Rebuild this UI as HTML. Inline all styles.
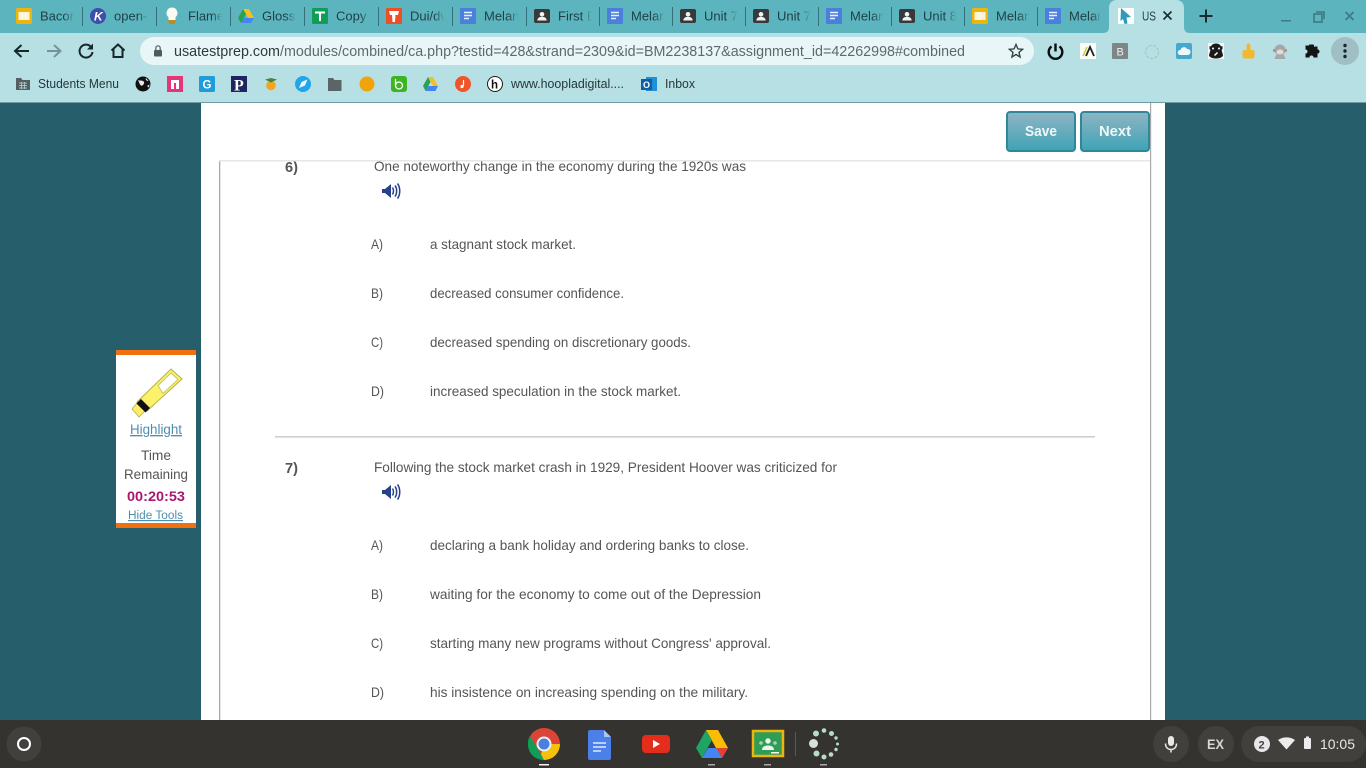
<!DOCTYPE html>
<html><head><meta charset="utf-8"><title>USATestprep</title>
<style>
html,body{margin:0;padding:0;width:1366px;height:768px;overflow:hidden;background:#265f6b}
svg{display:block;position:absolute;left:0;top:0}
text{font-family:"Liberation Sans",sans-serif}
.t{font-size:13px;fill:#1f3f45}
.q{font-size:14px;fill:#555}
.b{font-size:12.500px;fill:#26373a}
</style></head><body>
<svg width="1366" height="768" viewBox="0 0 1366 768" xmlns="http://www.w3.org/2000/svg">
<defs>
<linearGradient id="fade"><stop offset="0" stop-color="#5cb5be" stop-opacity="0"/><stop offset=".6" stop-color="#5cb5be"/><stop offset="1" stop-color="#5cb5be"/></linearGradient>
<linearGradient id="btn" x1="0" y1="0" x2="0" y2="1"><stop offset="0" stop-color="#8fb5c4"/><stop offset="1" stop-color="#3ea3b6"/></linearGradient>
<g id="doc"><rect width="16" height="16" rx="1" fill="#4a80dc"/><path d="M4 4.500h8M4 7.500h8M4 10.500h5" stroke="#e8f0fc" stroke-width="1.600"/></g>
<g id="cls"><rect width="16" height="14" y="1" rx="2" fill="#37393b"/><circle cx="8" cy="6.300" r="2.300" fill="#f2f2f2"/><path d="M3.300 12.500c.3-2.800 2.200-3.600 4.700-3.600s4.400.8 4.700 3.600z" fill="#f2f2f2"/></g>
<g id="sl"><rect width="16" height="16" rx="2" fill="#efb50f"/><rect x="2.500" y="4" width="11" height="8" fill="#fdf6dc"/></g>
<g id="spk"><path d="M1 7h3l6-5v14l-6-5H1z" fill="#27418a"/><path d="M11.500 5.500c1.300 2 1.300 5 0 7M14 3.500c2.200 3 2.200 8 0 11M16.500 1.500c3 4 3 11 0 15" fill="none" stroke="#27418a" stroke-width="1.500"/></g>
</defs>

<!-- page -->
<rect width="1366" height="768" fill="#265f6b"/>
<rect x="201" y="103" width="964" height="617" fill="#fff"/>
<rect x="219" y="161" width="1.300" height="559" fill="#a9a9a9"/>
<rect x="1150" y="103" width="1.200" height="617" fill="#a9a9a9"/>
<rect x="275" y="436" width="820" height="1.600" fill="#cfcfcf"/>

<!-- question 6 -->
<text x="285" y="172" font-size="14.500" font-weight="bold" fill="#555" textLength="13" lengthAdjust="spacingAndGlyphs">6)</text>
<text class="q" x="374" y="171" textLength="372" lengthAdjust="spacingAndGlyphs">One noteworthy change in the economy during the 1920s was</text>
<use href="#spk" x="381" y="182"/>
<text class="q" x="371" y="249" textLength="12" lengthAdjust="spacingAndGlyphs">A)</text>
<text class="q" x="430" y="249" textLength="146" lengthAdjust="spacingAndGlyphs">a stagnant stock market.</text>
<text class="q" x="371" y="298" textLength="12" lengthAdjust="spacingAndGlyphs">B)</text>
<text class="q" x="430" y="298" textLength="194" lengthAdjust="spacingAndGlyphs">decreased consumer confidence.</text>
<text class="q" x="371" y="347" textLength="12" lengthAdjust="spacingAndGlyphs">C)</text>
<text class="q" x="430" y="347" textLength="261" lengthAdjust="spacingAndGlyphs">decreased spending on discretionary goods.</text>
<text class="q" x="371" y="396" textLength="13" lengthAdjust="spacingAndGlyphs">D)</text>
<text class="q" x="430" y="396" textLength="251" lengthAdjust="spacingAndGlyphs">increased speculation in the stock market.</text>

<!-- header band over the scrolled content -->
<rect x="201" y="103" width="949" height="57" fill="#fff"/>
<rect x="219" y="160" width="931" height="1.500" fill="#e6e6e6"/>

<!-- buttons -->
<rect x="1007" y="112" width="68" height="39" rx="3" fill="url(#btn)" stroke="#2f8799" stroke-width="2"/>
<rect x="1081" y="112" width="68" height="39" rx="3" fill="url(#btn)" stroke="#2f8799" stroke-width="2"/>
<text x="1025" y="136" font-size="15" font-weight="bold" fill="#eef6f8" textLength="32" lengthAdjust="spacingAndGlyphs">Save</text>
<text x="1099" y="136" font-size="15" font-weight="bold" fill="#eef6f8" textLength="32" lengthAdjust="spacingAndGlyphs">Next</text>

<!-- question 7 -->
<text x="285" y="473" font-size="14.500" font-weight="bold" fill="#555" textLength="13" lengthAdjust="spacingAndGlyphs">7)</text>
<text class="q" x="374" y="472" textLength="463" lengthAdjust="spacingAndGlyphs">Following the stock market crash in 1929, President Hoover was criticized for</text>
<use href="#spk" x="381" y="483"/>
<text class="q" x="371" y="550" textLength="12" lengthAdjust="spacingAndGlyphs">A)</text>
<text class="q" x="430" y="550" textLength="319" lengthAdjust="spacingAndGlyphs">declaring a bank holiday and ordering banks to close.</text>
<text class="q" x="371" y="599" textLength="12" lengthAdjust="spacingAndGlyphs">B)</text>
<text class="q" x="430" y="599" textLength="331" lengthAdjust="spacingAndGlyphs">waiting for the economy to come out of the Depression</text>
<text class="q" x="371" y="648" textLength="12" lengthAdjust="spacingAndGlyphs">C)</text>
<text class="q" x="430" y="648" textLength="341" lengthAdjust="spacingAndGlyphs">starting many new programs without Congress' approval.</text>
<text class="q" x="371" y="697" textLength="13" lengthAdjust="spacingAndGlyphs">D)</text>
<text class="q" x="430" y="697" textLength="318" lengthAdjust="spacingAndGlyphs">his insistence on increasing spending on the military.</text>

<!-- sidebar -->
<rect x="116" y="350" width="80" height="178" fill="#fff"/>
<rect x="116" y="350" width="80" height="5" fill="#f0700f"/>
<rect x="116" y="523" width="80" height="5" fill="#f0700f"/>
<path d="M171 369l11 10-35 32-10-9z" fill="#fbf26a" stroke="#b5b04a" stroke-width="1"/>
<path d="M171 373l7 6.500-15 14-5-8z" fill="#fff" stroke="#c9c46a" stroke-width="1"/>
<path d="M137 403l8 8-6 6-7-8z" fill="#fbee6a" stroke="#b5b04a" stroke-width=".8"/>
<path d="M141 399l9 9-4.500 4.500-9-9z" fill="#111"/>
<text x="130" y="434" font-size="13.500" fill="#4e8db0" textLength="52" lengthAdjust="spacingAndGlyphs" text-decoration="underline">Highlight</text>
<text x="141" y="460" font-size="13.500" fill="#555" textLength="30" lengthAdjust="spacingAndGlyphs">Time</text>
<text x="124" y="479" font-size="13.500" fill="#555" textLength="64" lengthAdjust="spacingAndGlyphs">Remaining</text>
<text x="127" y="501" font-size="14" font-weight="bold" fill="#a8166f" textLength="58" lengthAdjust="spacingAndGlyphs">00:20:53</text>
<text x="128" y="519" font-size="11.500" fill="#4e8db0" textLength="55" lengthAdjust="spacingAndGlyphs" text-decoration="underline">Hide Tools</text>

<!-- browser chrome -->
<rect width="1366" height="33" fill="#5cb5be"/>
<rect y="33" width="1366" height="69" fill="#b7e0e5"/>
<rect y="102" width="1366" height="1" fill="#6f9ba3"/>
<path d="M1103 33c4 0 6-2 6-6V8c0-5 3-8 8-8h59c5 0 8 3 8 8v19c0 4 2 6 6 6z" fill="#b7e0e5"/>

<!-- tab labels -->
<text class="t" x="40" y="20.500">Bacon</text><rect x="64" y="6" width="18" height="20" fill="url(#fade)"/>
<text class="t" x="114" y="20.500">open-u</text><rect x="138" y="6" width="18" height="20" fill="url(#fade)"/>
<text class="t" x="188" y="20.500">Flame</text><rect x="212" y="6" width="18" height="20" fill="url(#fade)"/>
<text class="t" x="262" y="20.500">Glossa</text><rect x="286" y="6" width="18" height="20" fill="url(#fade)"/>
<text class="t" x="336" y="20.500">Copy o</text><rect x="360" y="6" width="18" height="20" fill="url(#fade)"/>
<text class="t" x="410" y="20.500">Dui/dv</text><rect x="434" y="6" width="18" height="20" fill="url(#fade)"/>
<text class="t" x="484" y="20.500">Melan</text><rect x="508" y="6" width="18" height="20" fill="url(#fade)"/>
<text class="t" x="558" y="20.500">First B</text><rect x="581" y="6" width="18" height="20" fill="url(#fade)"/>
<text class="t" x="631" y="20.500">Melan</text><rect x="654" y="6" width="18" height="20" fill="url(#fade)"/>
<text class="t" x="704" y="20.500">Unit 7</text><rect x="727" y="6" width="18" height="20" fill="url(#fade)"/>
<text class="t" x="777" y="20.500">Unit 7</text><rect x="800" y="6" width="18" height="20" fill="url(#fade)"/>
<text class="t" x="850" y="20.500">Melan</text><rect x="873" y="6" width="18" height="20" fill="url(#fade)"/>
<text class="t" x="923" y="20.500">Unit 8</text><rect x="946" y="6" width="18" height="20" fill="url(#fade)"/>
<text class="t" x="996" y="20.500">Melan</text><rect x="1019" y="6" width="18" height="20" fill="url(#fade)"/>
<text class="t" x="1069" y="20.500">Melan</text><rect x="1092" y="6" width="15" height="20" fill="url(#fade)"/>
<text class="t" x="1142" y="20.500" textLength="14" lengthAdjust="spacingAndGlyphs">US</text>

<!-- separators -->
<path d="M82.500 7v19M156.500 7v19M230.500 7v19M304.500 7v19M378.500 7v19M452.500 7v19M526.500 7v19M599.500 7v19M672.500 7v19M745.500 7v19M818.500 7v19M891.500 7v19M964.500 7v19M1037.500 7v19" stroke="#356f78" stroke-width="1"/>

<!-- tab icons -->
<use href="#sl" x="16" y="8"/>
<circle cx="98" cy="16" r="8" fill="#3f4fa8"/><text x="94" y="20.500" font-size="12" font-weight="bold" font-style="italic" fill="#fff">K</text>
<path d="M172 7.500a5.500 5.500 0 0 1 3.500 9.700V20h-7v-2.800a5.500 5.500 0 0 1 3.500-9.700z" fill="#fbfbf2"/><path d="M168.500 20h7v2.500a2 2 0 0 1-2 1.500h-3a2 2 0 0 1-2-1.500z" fill="#c08a22"/>
<path d="M243 9h6l5 9h-6z" fill="#f4c020"/><path d="M243 9l-5 9 3 5 5-9z" fill="#2ba24c"/><path d="M241 23h10l3-5h-10z" fill="#4285f4"/>
<rect x="312" y="8" width="16" height="16" rx="1" fill="#0f9d58"/><path d="M315 12.500h10M320 12.500V21" stroke="#fff" stroke-width="2"/>
<rect x="386" y="8" width="16" height="16" rx="1" fill="#ee4e26"/><path d="M389 11h10l-1 4h-2.500l-.5 7h-2.500l-.5-7h-2z" fill="#fff"/>
<use href="#doc" x="460" y="8"/><use href="#cls" x="534" y="8"/><use href="#doc" x="607" y="8"/><use href="#cls" x="680" y="8"/><use href="#cls" x="753" y="8"/><use href="#doc" x="826" y="8"/><use href="#cls" x="899" y="8"/><use href="#sl" x="972" y="8"/><use href="#doc" x="1045" y="8"/>
<rect x="1118" y="8" width="16" height="16" fill="#fbfdfd"/><path d="M1121 8l10 9-4.500.5 1 6-3 .500-1.500-5-2.500 2z" fill="#2f9bb8"/>
<path d="M1163.500 11.500l8 8M1171.500 11.500l-8 8" stroke="#1d2f33" stroke-width="1.700"/>
<path d="M1206 9.500v13M1199.500 16h13" stroke="#17292c" stroke-width="2"/>
<rect x="1281" y="20" width="10" height="1.500" fill="#3f7b85"/>
<rect x="1314" y="14" width="8" height="8" fill="none" stroke="#3f7b85" stroke-width="1.600"/><path d="M1316 12h8v7" fill="none" stroke="#3f7b85" stroke-width="1.600"/>
<path d="M1345.500 12l8 8M1353.500 12l-8 8" stroke="#3f7b85" stroke-width="1.800"/>

<!-- toolbar -->
<path d="M29 51H15.500M21.500 45l-6.500 6 6.500 6" fill="none" stroke="#17282b" stroke-width="2"/>
<path d="M47 51h13.500M54 45l6.500 6-6.500 6" fill="none" stroke="#74949a" stroke-width="2"/>
<path d="M91.500 47.500A6.500 6.500 0 1 0 92.500 52" fill="none" stroke="#17282b" stroke-width="2"/><path d="M93 43.500v6h-6z" fill="#17282b"/>
<path d="M111.500 50.500l6.500-6 6.500 6M113.500 49v8h9v-8" fill="none" stroke="#17282b" stroke-width="2"/>
<rect x="140" y="37" width="894" height="28" rx="14" fill="#e9f6f7"/>
<rect x="154" y="50" width="8" height="6.500" rx="1" fill="#4d5c60"/><path d="M155.800 50v-2a2.200 2.200 0 0 1 4.400 0v2" fill="none" stroke="#4d5c60" stroke-width="1.200"/>
<text x="174" y="56" font-size="14.500" fill="#2c3b3f" textLength="106" lengthAdjust="spacingAndGlyphs">usatestprep.com</text>
<text x="280" y="56" font-size="14.500" fill="#5d6a6d" textLength="685" lengthAdjust="spacingAndGlyphs">/modules/combined/ca.php?testid=428&amp;strand=2309&amp;id=BM2238137&amp;assignment_id=42262998#combined</text>
<path d="M1016 44.500l1.900 4.400 4.700.4-3.600 3.100 1.100 4.600-4.100-2.500-4.100 2.500 1.100-4.600-3.600-3.100 4.700-.4z" fill="none" stroke="#33464a" stroke-width="1.400"/>
<path d="M1051.500 46.500a6.800 6.800 0 1 0 8 0" fill="none" stroke="#0c0c0c" stroke-width="2.400"/><path d="M1055.500 43.500v8" stroke="#0c0c0c" stroke-width="2.400"/>
<rect x="1080" y="43" width="16" height="16" fill="#fdfdf8"/><path d="M1083 56l4-9" stroke="#c8c93a" stroke-width="1.500"/><path d="M1086 56l4-9 4 9" fill="none" stroke="#222" stroke-width="1.800"/>
<rect x="1112" y="43" width="16" height="16" rx="1" fill="#7f8687"/><text x="1116.500" y="55.500" font-size="11" fill="#eee">B</text>
<circle cx="1152" cy="52" r="6.500" fill="none" stroke="#a9c9bd" stroke-width="1.400" stroke-dasharray="3 1.500"/>
<rect x="1176" y="43" width="16" height="16" rx="2" fill="#45a9cf"/><path d="M1180 55a2.500 2.500 0 0 1 .5-5 3.500 3.500 0 0 1 6.500-1 3 3 0 0 1 1 6z" fill="#eef8fb"/>
<rect x="1208" y="43" width="16" height="16" fill="#f5f5f5"/><path d="M1216 43.500c3 0 4.500 1.500 5 3l1.500-.5v3l-1 1 1.500 5c0 2-3 3.500-7 3.500s-7-1.500-7-3.500l1.500-5-1-1v-3l1.500.5c.5-1.500 2-3 5-3z" fill="#1a1a1a"/><circle cx="1213" cy="48.500" r="1" fill="#fff"/><circle cx="1219" cy="48.500" r="1" fill="#fff"/><path d="M1214 55l3-3 1 1-3 3z" fill="#fff"/>
<path d="M1248.500 43.500c1.500 0 2 1 2 2.500v4h2.500c1 0 1.500.7 1.500 1.500v5c0 1.200-.8 2-2 2h-8c-1.200 0-2-.8-2-2v-5c0-.8.6-1.500 1.500-1.500h2.500V46c0-1.500 .5-2.500 2-2.500z" fill="#f3b92e"/>
<circle cx="1280" cy="50" r="5.500" fill="#a3a8a8"/><circle cx="1274.500" cy="50.500" r="1.600" fill="#b88f8f"/><circle cx="1285.500" cy="50.500" r="1.600" fill="#b88f8f"/><path d="M1276 55h8l1.500 4h-11z" fill="#a3a8a8"/><ellipse cx="1280" cy="52" rx="3.500" ry="2.500" fill="#e7d9d4"/>
<path d="M1309 44.500h4a1 1 0 0 1 1 1v1.500a2 2 0 0 1 1.500-.5h2v3a2 2 0 1 1 0 4v4h-4a2 2 0 1 0-4 0h-4v-4a2 2 0 1 0 0-4v-4h3.500v-.5a1 1 0 0 1 .500-.5z" fill="#141414"/>
<circle cx="1345" cy="51" r="14" fill="#9fbfc4"/><circle cx="1345" cy="45.500" r="1.700" fill="#17282b"/><circle cx="1345" cy="51" r="1.700" fill="#17282b"/><circle cx="1345" cy="56.500" r="1.700" fill="#17282b"/>

<!-- bookmarks -->
<path d="M16 78h5l1.500 2H30v10H16z" fill="#555f62"/><path d="M19 83h8M19 85.500h8M19 88h8M21.500 82v7M24.500 82v7" stroke="#b7e0e5" stroke-width=".7"/>
<text class="b" x="38" y="88" textLength="81" lengthAdjust="spacingAndGlyphs">Students Menu</text>
<circle cx="143" cy="84" r="7.500" fill="#111"/><path d="M138 80c2 1 3 0 5 1s1 3 0 4-2 1-3-.5zM146 78c-1 2 1 3 2.500 3M147 86l2.500-1.500-.5 3z" fill="#e9e9e9"/>
<rect x="167" y="76" width="16" height="16" fill="#e33577"/><rect x="171" y="80" width="8" height="9" fill="#fff"/><rect x="174" y="83" width="2" height="6" fill="#e33577"/>
<rect x="199" y="76" width="16" height="16" rx="1.500" fill="#1e9cdc"/><text x="202.500" y="88.500" font-size="11.500" font-weight="bold" fill="#fff">G</text>
<rect x="231" y="76" width="16" height="16" fill="#1e2560"/><text x="234" y="90.500" font-size="16" font-weight="bold" fill="#fff" style="font-family:'Liberation Serif',serif">P</text>
<circle cx="271" cy="85.500" r="4.800" fill="#f4a421"/><path d="M265 79.500l6-1.500 6 1.500-6 3z" fill="#3d8a3f"/>
<circle cx="303" cy="84" r="8" fill="#22a6ea"/><path d="M299 88l2.500-6 6-2.500-2.500 6z" fill="#eaf7fd"/>
<path d="M328 78h5l1.500 2h7v11H328z" fill="#5b6467"/>
<circle cx="367" cy="84" r="7.500" fill="#f0a30a"/>
<rect x="391" y="76" width="16" height="16" rx="3" fill="#3cb521"/><circle cx="399" cy="85.500" r="3.500" fill="none" stroke="#fff" stroke-width="1.300"/><path d="M395.500 79v6.500" stroke="#fff" stroke-width="1.300"/>
<path d="M428 77h5l5 9h-5z" fill="#f4c020"/><path d="M428 77l-5 9 2.500 5 5-9z" fill="#2ba24c"/><path d="M425.500 91h10l2.500-5h-10z" fill="#4285f4"/>
<circle cx="463" cy="84" r="8" fill="#f0552a"/><path d="M463.500 80v6" stroke="#fff" stroke-width="1.200"/><circle cx="462" cy="86.500" r="1.600" fill="#fff"/>
<circle cx="495" cy="84" r="7.500" fill="#fff" stroke="#1a1a1a" stroke-width="1"/><text x="491" y="88.500" font-size="11.500" font-weight="bold" fill="#111">h</text>
<text class="b" x="511" y="88" textLength="113" lengthAdjust="spacingAndGlyphs">www.hoopladigital....</text>
<rect x="646" y="77" width="11" height="14" fill="#1e90d6"/><rect x="641" y="79" width="11" height="11" fill="#0f5ea8"/><text x="643" y="88" font-size="9" font-weight="bold" fill="#fff">O</text>
<text class="b" x="665" y="88" textLength="30" lengthAdjust="spacingAndGlyphs">Inbox</text>

<!-- shelf -->
<rect y="720" width="1366" height="48" fill="#35332f"/>
<circle cx="24" cy="744" r="17.500" fill="#41403c"/>
<circle cx="24" cy="744" r="6" fill="none" stroke="#fff" stroke-width="2"/>
<!-- chrome -->
<circle cx="544" cy="744" r="16" fill="#db4437"/>
<path d="M544 744l16 0a16 16 0 0 1-16 16l-4-2z" fill="#f4c20d"/>
<path d="M544 760a16 16 0 0 1-14-24l8 13z" fill="#0f9d58"/>
<circle cx="544" cy="744" r="7.500" fill="#e8f0fa"/><circle cx="544" cy="744" r="5.500" fill="#4a80dc"/>
<rect x="539" y="764" width="10" height="1.500" fill="#f0f0f0"/>
<!-- docs -->
<path d="M590 730h14l7 7v21a2 2 0 0 1-2 2h-19a2 2 0 0 1-2-2v-26a2 2 0 0 1 2-2z" fill="#4a80e8"/>
<path d="M604 730l7 7h-7z" fill="#a8c4f4"/>
<path d="M593 743h13M593 747h13M593 751h8" stroke="#dfe9fb" stroke-width="1.500"/>
<!-- youtube -->
<rect x="642" y="735" width="28" height="18" rx="4" fill="#e52d1b"/><path d="M653 740l7 4-7 4z" fill="#fff"/>
<!-- drive -->
<path d="M706 730h12l10 18h-12z" fill="#fbbc05"/>
<path d="M706 730l-10 18 6 10 10-18z" fill="#1fa463"/>
<path d="M702 758h20l6-10h-20z" fill="#4285f4"/>
<path d="M728 748l-6 10-6-10z" fill="#e34133"/>
<rect x="708" y="764" width="7" height="1.500" fill="#aaa"/>
<!-- classroom -->
<rect x="753" y="731" width="30" height="25" fill="#2f9d55" stroke="#f0b40f" stroke-width="2.500"/>
<circle cx="768" cy="741" r="2.700" fill="#eaf5ec"/><path d="M762 750c0-3.500 3-4.500 6-4.500s6 1 6 4.500z" fill="#eaf5ec"/><circle cx="761" cy="743" r="1.800" fill="#a6d5b4"/><circle cx="775" cy="743" r="1.800" fill="#a6d5b4"/>
<rect x="771" y="752" width="8" height="1.500" fill="#fff"/>
<rect x="764" y="764" width="7" height="1.500" fill="#aaa"/>
<rect x="795" y="732" width="1" height="24" fill="#5c5a56"/>
<!-- spinner -->
<circle cx="813.500" cy="743.500" r="4.500" fill="#d8e0dc"/>
<circle cx="816" cy="733.500" r="3" fill="#b8dcc6"/><circle cx="824" cy="730.500" r="2.300" fill="#b8dcc6"/><circle cx="831.500" cy="733.500" r="2.500" fill="#b8dcc6"/><circle cx="836" cy="738" r="1.700" fill="#b8dcc6"/><circle cx="837.500" cy="744" r="1.500" fill="#b8dcc6"/><circle cx="836" cy="749.500" r="1.700" fill="#b8dcc6"/><circle cx="831" cy="754.500" r="2.300" fill="#b8dcc6"/><circle cx="824" cy="757" r="2.500" fill="#b8dcc6"/><circle cx="816.500" cy="753.500" r="3" fill="#b8dcc6"/>
<rect x="820" y="764" width="7" height="1.500" fill="#aaa"/>

<!-- status -->
<circle cx="1171" cy="744" r="18" fill="#41403c"/>
<rect x="1168" y="736" width="6" height="10" rx="3" fill="#e8e8e8"/><path d="M1165.500 743.500c0 4 2.500 6 5.500 6s5.500-2 5.500-6M1171 749.500v3" fill="none" stroke="#e8e8e8" stroke-width="1.500"/>
<circle cx="1216" cy="744" r="18" fill="#41403c"/>
<text x="1207" y="749" font-size="13.500" font-weight="bold" fill="#d8d8d8" textLength="17" lengthAdjust="spacingAndGlyphs">EX</text>
<rect x="1241" y="726" width="125" height="36" rx="18" fill="#41403c"/>
<circle cx="1262" cy="744" r="8" fill="#e8e8e8"/><text x="1258.500" y="748.500" font-size="11" font-weight="bold" fill="#45443f">2</text>
<path d="M1278 740c5-3.500 12-3.500 17 0l-8.500 9.500z" fill="#ececec"/>
<rect x="1304" y="738" width="7" height="11" rx="1" fill="#ececec"/><rect x="1306" y="736.500" width="3" height="2" fill="#ececec"/>
<text x="1320" y="749" font-size="14" fill="#e8e8e8" textLength="35" lengthAdjust="spacingAndGlyphs">10:05</text>
</svg>
</body></html>
